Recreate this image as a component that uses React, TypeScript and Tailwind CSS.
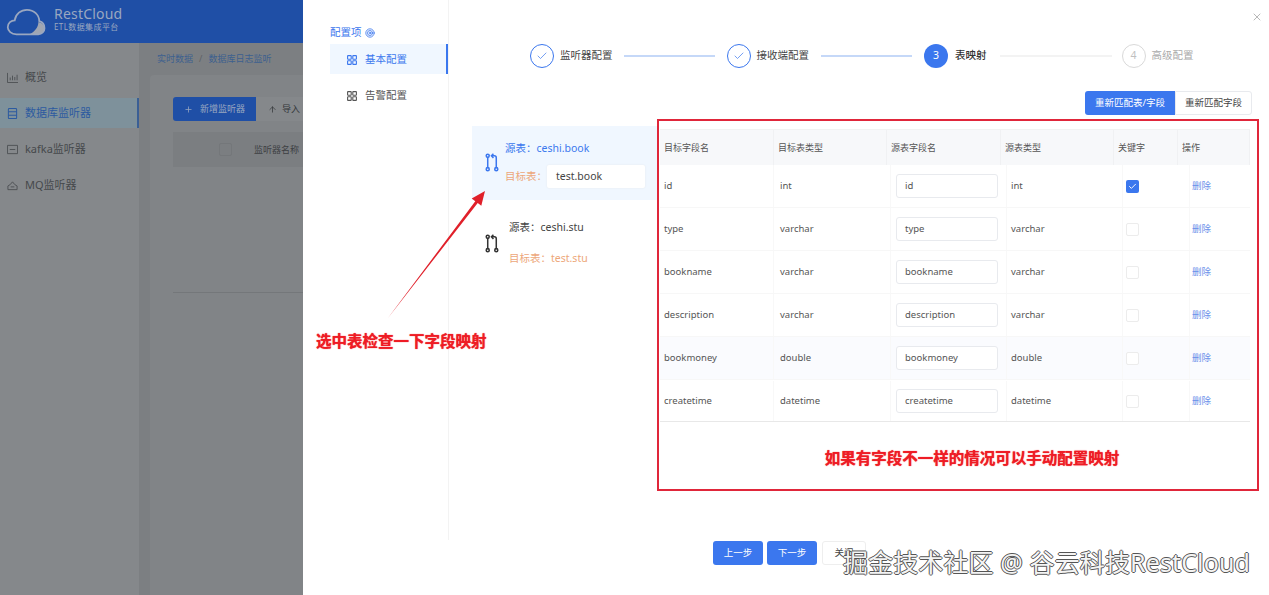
import { Check, Plus, ArrowUp, X, Target } from "lucide-react"

const rows = [
  { name: "id", type: "int", key: true },
  { name: "type", type: "varchar", key: false },
  { name: "bookname", type: "varchar", key: false },
  { name: "description", type: "varchar", key: false },
  { name: "bookmoney", type: "double", key: false, hover: true },
  { name: "createtime", type: "datetime", key: false, last: true },
]

const headers = [
  { label: "目标字段名", w: "w-[114px]" },
  { label: "目标表类型", w: "w-[113px]" },
  { label: "源表字段名", w: "w-[114px]" },
  { label: "源表类型", w: "w-[113px]" },
  { label: "关键字", w: "w-[64px]" },
  { label: "操作", w: "w-[72px]" },
]

function MergeIcon({ className }: { className: string }) {
  return (
    <svg viewBox="0 0 14 20" fill="none" stroke="currentColor" strokeWidth="1.6" className={className}>
      <circle cx="2.5" cy="3" r="1.6" />
      <circle cx="2.5" cy="17" r="1.6" />
      <path d="M2.5 4.6v10.8" />
      <circle cx="11.5" cy="17" r="1.6" />
      <path d="M11.5 15.4V5a2 2 0 0 0-2-2H7" />
      <path d="M8.5 .8L6.4 3l2.1 2.2" />
    </svg>
  )
}

function GridIcon({ className }: { className: string }) {
  return (
    <svg viewBox="0 0 10 10" fill="none" stroke="currentColor" strokeWidth="1.1" className={className}>
      <rect x=".6" y=".6" width="3.6" height="3.6" rx=".5" />
      <rect x="5.8" y=".6" width="3.6" height="3.6" rx=".5" />
      <rect x=".6" y="5.8" width="3.6" height="3.6" rx=".5" />
      <rect x="5.8" y="5.8" width="3.6" height="3.6" rx=".5" />
    </svg>
  )
}

function Logo() {
  return (
    <svg viewBox="0 0 46 32" fill="none" className="w-[42px] h-[28px]">
      <path d="M36 16c5 1 8 5 7 9-1 3-3 5-7 5H26c6-3 10-8 10-14z" fill="#a0a6b2" />
      <path
        d="M11 30C5 30 1 26 1 22c0-5 4-8 8-8 1-7 7-12 14-12 8 0 14 6 14 13 4 1 6 4 6 8 0 4-3 7-7 7z"
        stroke="#9aa7c0"
        strokeWidth="2"
      />
    </svg>
  )
}

function ChartIcon() {
  return (
    <svg viewBox="0 0 12 12" fill="none" stroke="#4d5053" strokeWidth="1" className="w-[11px] h-[11px]">
      <path d="M.5 1v10.5H12M3.5 9V6M6 9V4M8.5 9V5.5M11 9V3" />
    </svg>
  )
}

function DbIcon() {
  return (
    <svg viewBox="0 0 12 12" fill="none" stroke="#2c5aa0" strokeWidth="1.1" className="w-[11px] h-[11px]">
      <rect x="1.5" y=".5" width="9" height="11" rx="1" />
      <path d="M1.5 4h9M1.5 8h9" />
    </svg>
  )
}

function KafkaIcon() {
  return (
    <svg viewBox="0 0 12 12" fill="none" stroke="#4d5053" strokeWidth="1" className="w-[11px] h-[11px]">
      <path d="M.5 1.5h11M.5 10.5h11M3 6h6M.5 1.5v9M11.5 1.5v9" />
    </svg>
  )
}

function MqIcon() {
  return (
    <svg viewBox="0 0 12 12" fill="none" stroke="#4d5053" strokeWidth="1" className="w-[11px] h-[11px]">
      <path d="M1 10.5h10V6.5L8.5 5 6 2 3.5 5 1 6.5zM4 7.5h4" />
    </svg>
  )
}

function Backdrop() {
  return (
    <div className="w-[303px] h-[595px] shrink-0 overflow-hidden bg-[#7c7f82]">
      <div className="h-[43px] bg-[#1f4fa6] flex items-center pl-[6px] gap-[6px]">
        <Logo />
        <div className="text-[#9aa7c0] leading-none mb-[6px]">
          <div className="text-[14px] tracking-[0.2px]">RestCloud</div>
          <div className="text-[8px] mt-[2px] tracking-[0.4px]">ETL数据集成平台</div>
        </div>
      </div>
      <div className="flex">
        <div className="w-[139px] h-[552px] shrink-0 bg-[#85888b] pt-[19px] text-[11px] text-[#45484b]">
          <div className="h-[30px] flex items-center pl-[7px] gap-[7px]">
            <ChartIcon />
            概览
          </div>
          <div className="h-[30px] mt-[6px] flex items-center pl-[7px] gap-[7px] bg-[#7e919b] border-r-2 border-[#3a5f95] text-[#2c5aa0]">
            <DbIcon />
            数据库监听器
          </div>
          <div className="h-[30px] mt-[6px] flex items-center pl-[7px] gap-[7px]">
            <KafkaIcon />
            kafka监听器
          </div>
          <div className="h-[30px] mt-[6px] flex items-center pl-[7px] gap-[7px]">
            <MqIcon />
            MQ监听器
          </div>
        </div>
        <div className="flex-1 min-w-0 overflow-hidden">
          <div className="h-[32px] flex items-center pl-[18px] text-[9px] text-[#3c5f8f] gap-[6px]">
            <span>实时数据</span>
            <span className="text-[#5f6265]">/</span>
            <span>数据库日志监听</span>
          </div>
          <div className="ml-[11px] h-[520px] bg-[#818487] rounded-tl-[4px] pt-[22px] pl-[23px]">
            <div className="flex h-[24px] text-[9px]">
              <div className="w-[83px] shrink-0 bg-[#1f4fa6] rounded-l-[3px] text-[#9aa7c0] flex items-center justify-center gap-[7px]">
                <Plus size={9} />
                新增监听器
              </div>
              <div className="w-[60px] shrink-0 bg-[#85888b] text-[#34373a] flex items-center pl-[12px] gap-[5px]">
                <ArrowUp size={9} />
                导入
              </div>
            </div>
            <div className="mt-[11px] h-[35px] bg-[#7b7e81] flex items-center text-[9px] text-[#3d4043] pl-[46px]">
              <div className="w-[13px] h-[13px] border border-[#74777a] rounded-[2px] mr-[22px] shrink-0" />
              <span className="whitespace-nowrap">监听器名称</span>
            </div>
            <div className="mt-[125px] h-px bg-[#74777a]" />
          </div>
        </div>
      </div>
    </div>
  )
}

function StepDone({ label }: { label: string }) {
  return (
    <div className="flex items-center gap-[6px]">
      <div className="w-[24px] h-[24px] rounded-full border border-[#3b77ee] flex items-center justify-center text-[#3b77ee]">
        <Check size={12} strokeWidth={1.4} />
      </div>
      <span className="text-[10.5px] text-[#444]">{label}</span>
    </div>
  )
}

function Steps() {
  return (
    <div className="flex items-center pl-[81px] pt-[44px] h-[68px]">
      <StepDone label="监听器配置" />
      <div className="w-[91px] h-[2px] bg-[#c5d8f8] ml-[11px] mr-[12px]" />
      <StepDone label="接收端配置" />
      <div className="w-[91px] h-[2px] bg-[#c5d8f8] ml-[12px] mr-[12px]" />
      <div className="w-[24px] h-[24px] rounded-full bg-[#3b77ee] text-white text-[10.5px] flex items-center justify-center">3</div>
      <span className="ml-[7px] text-[10.5px] text-[#333] font-medium">表映射</span>
      <div className="w-[112px] h-[2px] bg-[#f3f3f3] ml-[13px] mr-[10px]" />
      <div className="w-[24px] h-[24px] rounded-full border border-[#d9d9d9] text-[#bfbfbf] text-[10.5px] flex items-center justify-center">4</div>
      <span className="ml-[6px] text-[10.5px] text-[#aaa]">高级配置</span>
    </div>
  )
}

function MappingTable() {
  return (
    <div className="w-[590px] ml-[3px] mt-[3px] text-[9.5px] text-[#555]">
      <div className="flex h-[36px] text-[9px] bg-[#f7f8fa] border-t border-[#f2f2f2]">
        {headers.map((h) => (
          <div key={h.label} className={`${h.w} border-r border-[#f0f1f3] flex items-center pl-[4px]`}>
            {h.label}
          </div>
        ))}
      </div>
      {rows.map((row) => (
        <div
          key={row.name}
          className={`flex items-center border-b ${row.last ? "h-[42px] pt-px border-[#e8e8e8]" : "h-[43px] border-[#f7f7f7]"} ${row.hover ? "bg-[#fafbfe]" : ""}`}
        >
          <div className="w-[114px] h-full flex items-center pl-[4px] border-r border-[#f8f8f8]">{row.name}</div>
          <div className="w-[117px] h-full flex items-center pl-[6px] border-r border-[#f8f8f8]">{row.type}</div>
          <div className="w-[116px] h-full flex items-center pl-[5px] border-r border-[#f8f8f8]">
            <div className="w-[102px] h-[24px] bg-white border border-[#e8eaee] rounded-[3px] flex items-center pl-[8px]">{row.name}</div>
          </div>
          <div className="w-[116px] h-full flex items-center pl-[4px] border-r border-[#f8f8f8]">{row.type}</div>
          <div className="w-[67px] h-full flex items-center pl-[3px] border-r border-[#f8f8f8]">
            {row.key ? (
              <div className="w-[13px] h-[13px] rounded-[2px] bg-[#3b77ee] flex items-center justify-center text-white">
                <Check size={9} strokeWidth={2.5} />
              </div>
            ) : (
              <div className="w-[13px] h-[13px] rounded-[2px] border border-[#ececec] bg-white" />
            )}
          </div>
          <div className="pl-[2px] text-[#6a90ea]">删除</div>
        </div>
      ))}
    </div>
  )
}

function Drawer() {
  return (
    <div className="relative flex-1 h-[595px] bg-white flex">
      <X size={12} strokeWidth={1.2} className="absolute right-[6px] top-[11px] text-[#888]" />
      <div className="w-[146px] h-[540px] shrink-0 pl-[27px] pt-[26px] border-r border-[#f3f3f3]">
        <div className="h-[14px] flex items-center gap-[3px] text-[10.5px] text-[#3b77ee]">
          配置项
          <Target size={10} />
        </div>
        <div className="mt-[4px] h-[30px] bg-[#f0f7ff] border-r-2 border-[#3b77ee] flex items-center pl-[17px] pt-[1px] gap-[8px] text-[10.5px] text-[#3b77ee]">
          <GridIcon className="w-[10px] h-[10px]" />
          基本配置
        </div>
        <div className="mt-[6px] h-[30px] flex items-center pl-[17px] pt-[1px] gap-[8px] text-[10.5px] text-[#555]">
          <GridIcon className="w-[10px] h-[10px]" />
          告警配置
        </div>
      </div>
      <div className="flex-1 min-w-0">
        <Steps />
        <div className="flex justify-end pr-[17px] mt-[23px] text-[9.5px]">
          <div className="w-[90px] h-[24px] bg-[#3b77ee] text-white rounded-l-[3px] flex items-center justify-center">重新匹配表/字段</div>
          <div className="w-[77px] h-[24px] bg-white border border-[#e8eaee] text-[#444] rounded-r-[3px] flex items-center justify-center">重新匹配字段</div>
        </div>
        <div className="flex mt-[11px] items-start">
          <div className="ml-[23px] w-[185px] shrink-0 text-[10.5px]">
            <div className="h-[74px] bg-[#f0f7ff] flex items-center pl-[13px] gap-[6px]">
              <MergeIcon className="w-[14px] h-[19px] text-[#3b77ee] -mt-[2px]" />
              <div className="pt-[3px]">
                <div className="text-[#3b77ee]">源表：ceshi.book</div>
                <div className="flex items-center mt-[9px] text-[#eda77a]">
                  目标表：
                  <div className="w-[98px] h-[23px] bg-white rounded-[2px] shadow-[0_0_2px_#e5e7eb] text-[#444] flex items-center pl-[9px]">test.book</div>
                </div>
              </div>
            </div>
            <div className="h-[74px] flex items-center pl-[13px] gap-[10px]">
              <MergeIcon className="w-[14px] h-[19px] text-[#333] mt-[12px]" />
              <div className="mt-[13px]">
                <div className="text-[#444]">源表：ceshi.stu</div>
                <div className="mt-[15px] text-[#eda77a]">目标表：test.stu</div>
              </div>
            </div>
          </div>
          <MappingTable />
        </div>
        <div className="flex gap-[4px] pl-[264px] mt-[119px] text-[9.5px]">
          <div className="w-[50px] h-[24px] bg-[#3b77ee] text-white rounded-[3px] flex items-center justify-center">上一步</div>
          <div className="w-[50px] h-[24px] bg-[#3b77ee] text-white rounded-[3px] flex items-center justify-center">下一步</div>
          <div className="w-[44px] h-[24px] bg-white border border-[#eee] ml-[1px] text-[#444] rounded-[3px] flex items-center justify-center">关闭</div>
        </div>
      </div>
    </div>
  )
}

export default function App() {
  return (
    <div className="relative w-[1269px] h-[595px] overflow-hidden flex font-['Noto_Sans','Noto_Sans_CJK_SC',sans-serif]">
      <Backdrop />
      <Drawer />

      {/* annotations drawn on top of the screenshot */}
      <div className="absolute left-[657px] top-[119px] w-[602px] h-[372px] border-2 border-[#e0263a]" />
      <div className="absolute left-[658px] top-[450px] w-[628px] text-center text-[15.5px] leading-[16px] font-bold text-[#ee1c25] [text-shadow:0_0_1px_#ee1c25]">
        如果有字段不一样的情况可以手动配置映射
      </div>
      <div className="absolute left-[316px] top-[333px] text-[15.5px] leading-[16px] font-bold text-[#ee1c25] [text-shadow:0_0_1px_#ee1c25]">选中表检查一下字段映射</div>
      <svg viewBox="0 0 110 140" className="absolute left-[383px] top-[184px] w-[110px] h-[140px]">
        <polygon points="5,134 92.3,17.2 88.7,14.5 102,7 98.3,21.7 94.7,19" fill="#e0202a" />
      </svg>
      <div className="absolute left-[843px] top-[546px] whitespace-nowrap text-[25px] leading-[32px] tracking-[0.12px] text-[#f4f4f4] [text-shadow:-1px_0_#555,1px_0_#555,0_-1px_#555,0_1px_#555]">
        掘金技术社区 @ 谷云科技RestCloud
      </div>
    </div>
  )
}
